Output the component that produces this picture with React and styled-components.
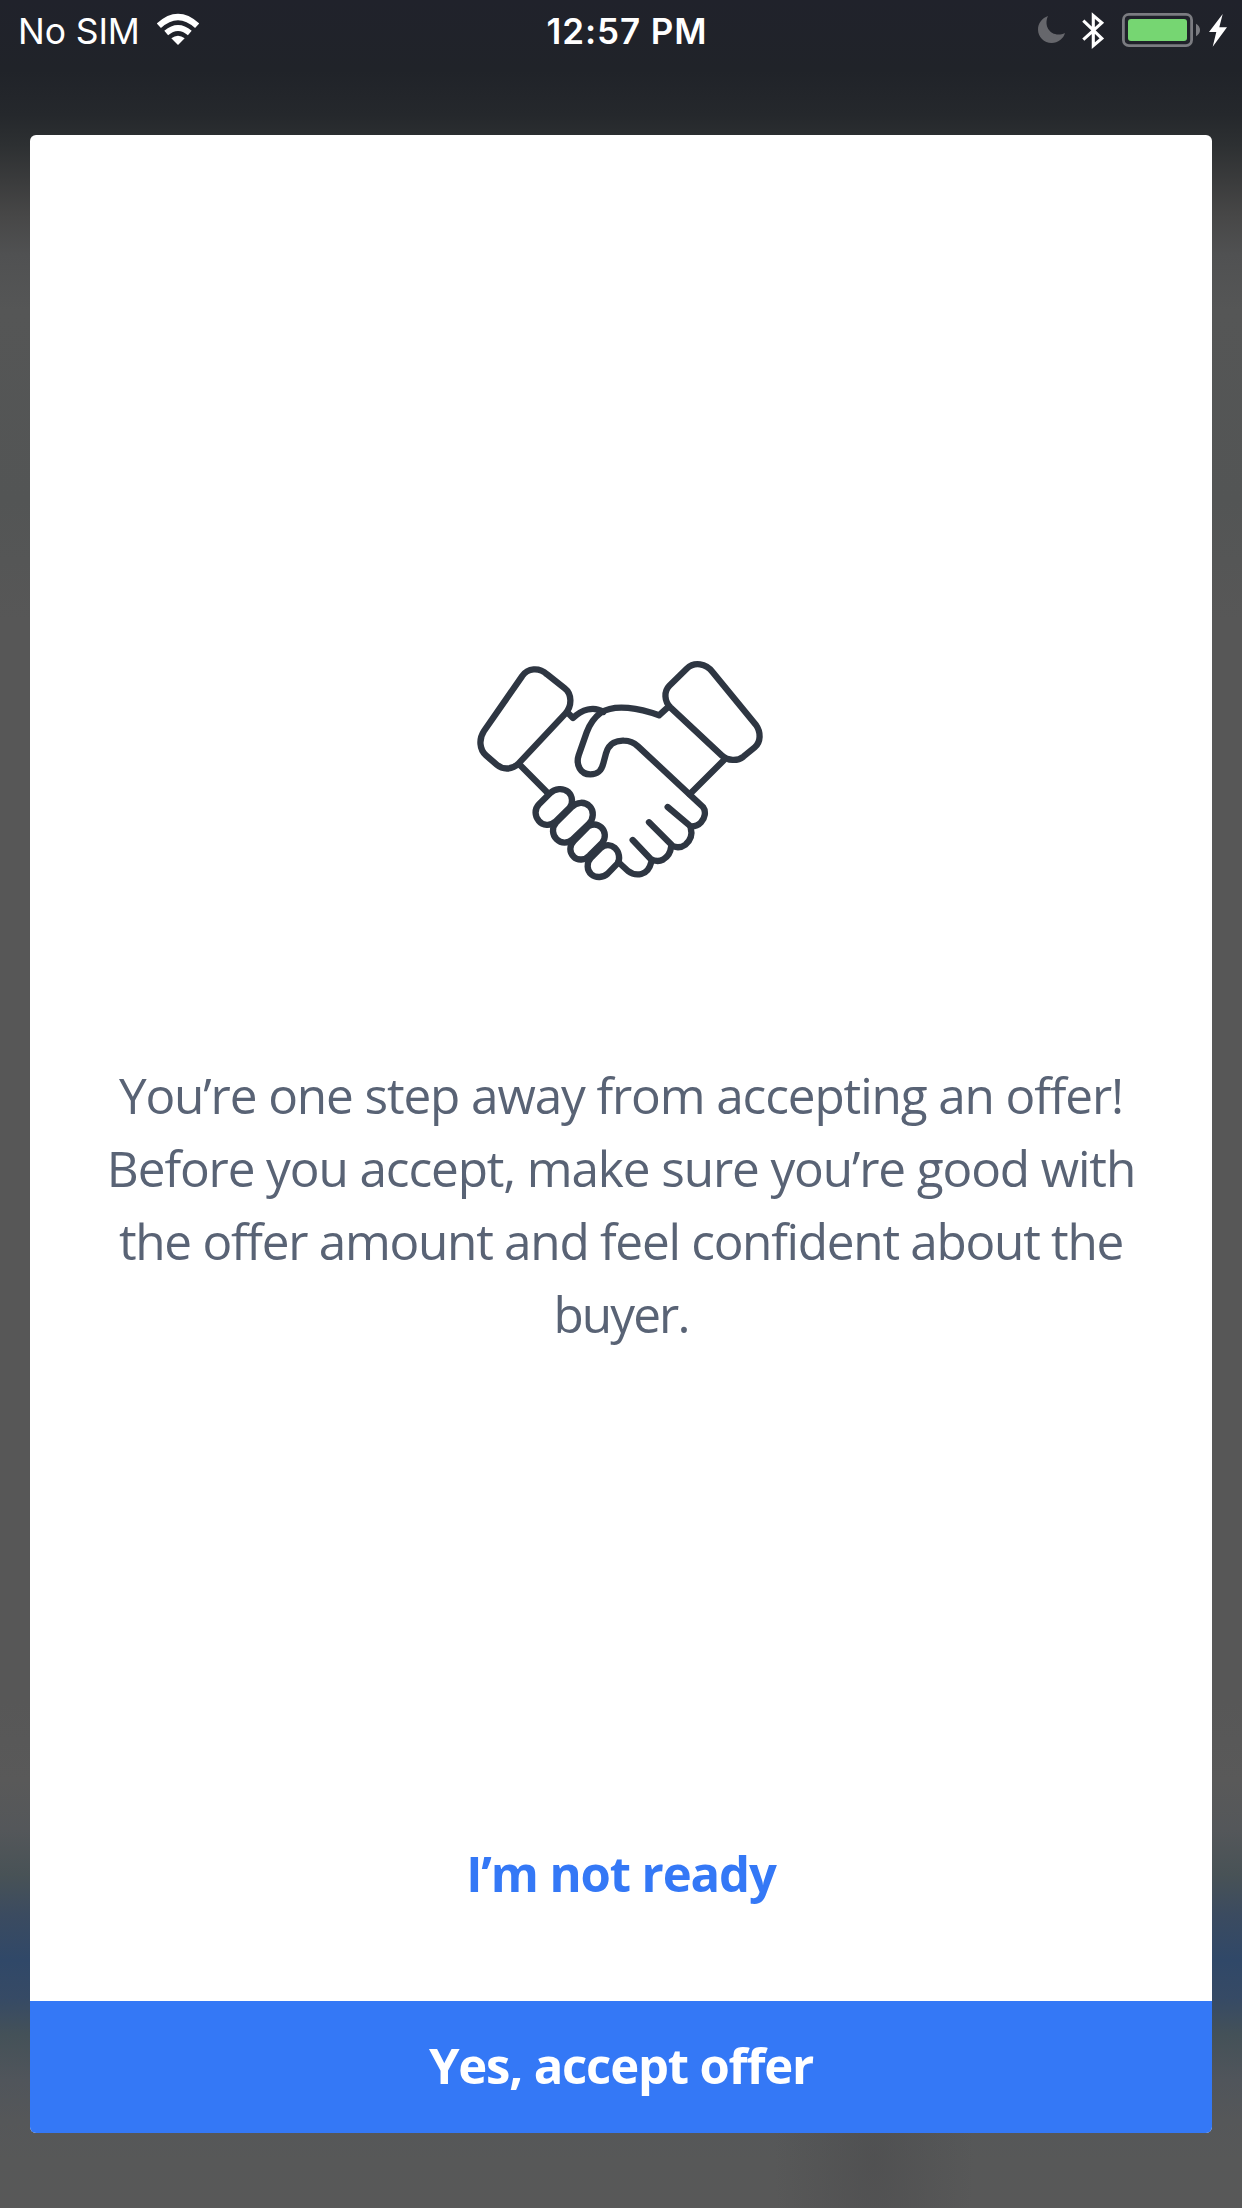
import React from "react";
import styled, { createGlobalStyle } from "styled-components";

const GlobalStyle = createGlobalStyle`
  * { box-sizing: border-box; }
  body { margin: 0; background: #575858; }
`;

const Screen = styled.main`
  width: 1242px;
  height: 2208px;
  display: flex;
  flex-direction: column;
  overflow: hidden;
  background:
    radial-gradient(ellipse 100px 220px at 874px 2160px, rgba(70, 70, 72, 0.4), rgba(70, 70, 72, 0)),
    linear-gradient(
      180deg,
      #20222b 0, #202329 70px, #25282c 115px, #2d3032 145px, #3a3b3c 180px,
      #474747 215px, #505152 255px, #555656 310px, #535555 500px, #575757 620px,
      #575757 1700px, #595959 1780px, #54575a 1830px, #485256 1875px,
      #3b4b60 1915px, #304868 1960px, #364a65 1998px, #445158 2035px,
      #50555b 2080px, #555759 2120px, #575858 2160px, #585858 2208px
    );
`;

const StatusBar = styled.header`
  height: 135px;
  display: grid;
  grid-template-columns: 1fr auto 1fr;
  align-items: start;
  padding: 0 15px 0 18px;
  font-family: Inter, "Liberation Sans", sans-serif;
  font-size: 35.5px;
  line-height: 64px;
  color: #fff;
`;

const Carrier = styled.div`
  display: flex;
  align-items: flex-start;
  gap: 17px;
  letter-spacing: -0.1px;
`;

const Clock = styled.time`
  font-weight: 600;
  font-size: 35px;
  line-height: 63px;
  letter-spacing: 0.9px;
  padding-left: 9px;
`;

const Indicators = styled.div`
  display: flex;
  justify-content: flex-end;
  height: 62px;
`;

const Dialog = styled.section`
  width: 1182px;
  height: 1998px;
  margin: 0 auto;
  display: flex;
  flex-direction: column;
  align-items: center;
  overflow: hidden;
  border-radius: 6px;
  background: #fff;
  font-family: "Open Sans", "Noto Sans", sans-serif;
`;

const Illustration = styled.svg`
  width: 320px;
  height: 260px;
  margin-top: 505px;
  flex: none;
`;

const Message = styled.p`
  margin: 159px 0 0;
  font-size: 49.5px;
  line-height: 73px;
  color: #596375;
  text-align: center;
`;

const Line = styled.span`
  display: block;
  white-space: nowrap;
  letter-spacing: ${(p) => p.$tracking}px;
`;

const Button = styled.button`
  width: 100%;
  height: 132px;
  flex: none;
  margin: 0;
  padding: 0 0 4px;
  border: 0;
  font: 700 49px/128px "Open Sans", "Noto Sans", sans-serif;
  letter-spacing: ${(p) => p.$tracking}px;
  color: ${(p) => (p.$primary ? "#fff" : "#3478f6")};
  background: ${(p) => (p.$primary ? "#3478f6" : "transparent")};
`;

const Actions = styled.footer`
  width: 100%;
  margin-top: auto;
  display: flex;
  flex-direction: column;
  gap: 60px;
`;

const WifiIcon = () => (
  <svg width="42" height="62" viewBox="0 0 42 62" fill="none">
    <path d="M1.800 25.800Q21 8.200 40.200 25.800" stroke="#fff" strokeWidth="6.300" />
    <path d="M9.200 33Q21 22.800 32.800 33" stroke="#fff" strokeWidth="5.800" />
    <path d="M14.300 38.300Q21 33 27.700 38.300L21 45Z" fill="#fff" />
  </svg>
);

const MoonIcon = () => (
  <svg width="27" height="62" viewBox="0 0 27 62">
    <path d="M10 16C4.200 18 0 23.400 0 29.500C0 37 6 43 13.700 43C20 43 25.600 38.500 27 33C15 38.500 4.500 28 10 16Z" fill="#66676c" />
  </svg>
);

const BluetoothIcon = () => (
  <svg width="25" height="62" viewBox="0 0 25 62" fill="none">
    <path d="M1.300 20.700L19.800 38.500L11.300 45.700V15.500L19.800 22.800L1.300 39.700" stroke="#fff" strokeWidth="3.100" />
  </svg>
);

const BatteryIcon = () => (
  <svg width="79" height="62" viewBox="0 0 79 62">
    <rect x="1.400" y="14.400" width="68.200" height="31.200" rx="5.500" fill="none" stroke="#7b7c81" strokeWidth="2.800" />
    <rect x="6" y="19" width="59" height="22" rx="3" fill="#76d672" />
    <path d="M74 23.700Q78 26 78 30Q78 34 74 36.300Z" fill="#7b7c81" />
  </svg>
);

const BoltIcon = () => (
  <svg width="18" height="62" viewBox="0 0 18 62">
    <path d="M13.700 14L0 32H7.300L3.700 46.700L18 27.300H10.300Z" fill="#fff" />
  </svg>
);

const IndicatorSlot = styled.span`
  display: flex;
  margin-left: ${(p) => p.$gap}px;
`;

const Handshake = () => (
  <Illustration viewBox="3 -1 960 780" fill="none" stroke="#2e3642" strokeWidth="19" strokeLinecap="round" strokeLinejoin="round">
    <path d="M186 108L72 272C56 296 58 327 78 345L110 373C130 390 158 388 176 369L316 220C337 197 336 161 314 144L261 102C237 80 203 83 186 108Z" />
    <path d="M680 85L628 136C611 153 613 183 631 201L785 345C804 362 832 363 850 349L884 321C903 305 903 275 888 254L757 94C738 70 704 62 680 85Z" />
    <path d="M324 218L339 233C365 208 401 196 430 215" />
    <path d="M620 204L597 225C540 204 465 189 422 217Q394 238 380 276L356 345C347 373 361 402 391 402C416 402 425 390 430 369L438 339C447 307 472 300 492 301Q516 301 534 318L729 500C739 513 735 533 723 546Q711 559 692 558L623 500" />
    <path d="M792 359L689 462M180 374L264 459" />
    <path d="M692 562C698 584 690 602 676 613Q660 625 639 618L567 546" />
    <path d="M633 621C631 641 620 651 609 658Q592 667 572 656L518 599" />
    <path d="M574 665C569 685 557 698 544 701Q522 706 504 692L478 668" />
    <path d="M270 459L237 492C222 507 225 528 236 541C248 556 271 558 286 544L328 503C341 490 337 466 325 455C309 442 285 444 270 459Z" />
    <path d="M335 500L289 546C274 562 277 584 290 597C303 610 324 610 338 597L386 551C402 536 402 511 389 498C375 483 350 484 335 500Z" />
    <path d="M385 558L342 601C327 616 328 637 341 649C353 661 374 661 389 645L426 608C439 594 436 572 424 561C414 552 400 549 385 558Z" />
    <path d="M422 623L393 652C379 667 380 690 394 702C408 714 430 712 443 700L472 670C482 656 477 634 465 623C453 613 437 611 422 623Z" />
  </Illustration>
);

export default function App() {
  return (
    <>
      <GlobalStyle />
      <Screen>
        <StatusBar>
          <Carrier>
            <span>No SIM</span>
            <WifiIcon />
          </Carrier>
          <Clock>12:57 PM</Clock>
          <Indicators>
            <IndicatorSlot $gap={0}><MoonIcon /></IndicatorSlot>
            <IndicatorSlot $gap={17}><BluetoothIcon /></IndicatorSlot>
            <IndicatorSlot $gap={15}><BatteryIcon /></IndicatorSlot>
            <IndicatorSlot $gap={8}><BoltIcon /></IndicatorSlot>
          </Indicators>
        </StatusBar>
        <Dialog>
          <Handshake />
          <Message>
            <Line $tracking={-1.12}>You’re one step away from accepting an offer!</Line>
            <Line $tracking={-1.12}>Before you accept, make sure you’re good with</Line>
            <Line $tracking={-1.28}>the offer amount and feel confident about the</Line>
            <Line $tracking={-1.9}>buyer.</Line>
          </Message>
          <Actions>
            <Button $tracking={-1.1}>I’m not ready</Button>
            <Button $primary $tracking={-1.17}>Yes, accept offer</Button>
          </Actions>
        </Dialog>
      </Screen>
    </>
  );
}
